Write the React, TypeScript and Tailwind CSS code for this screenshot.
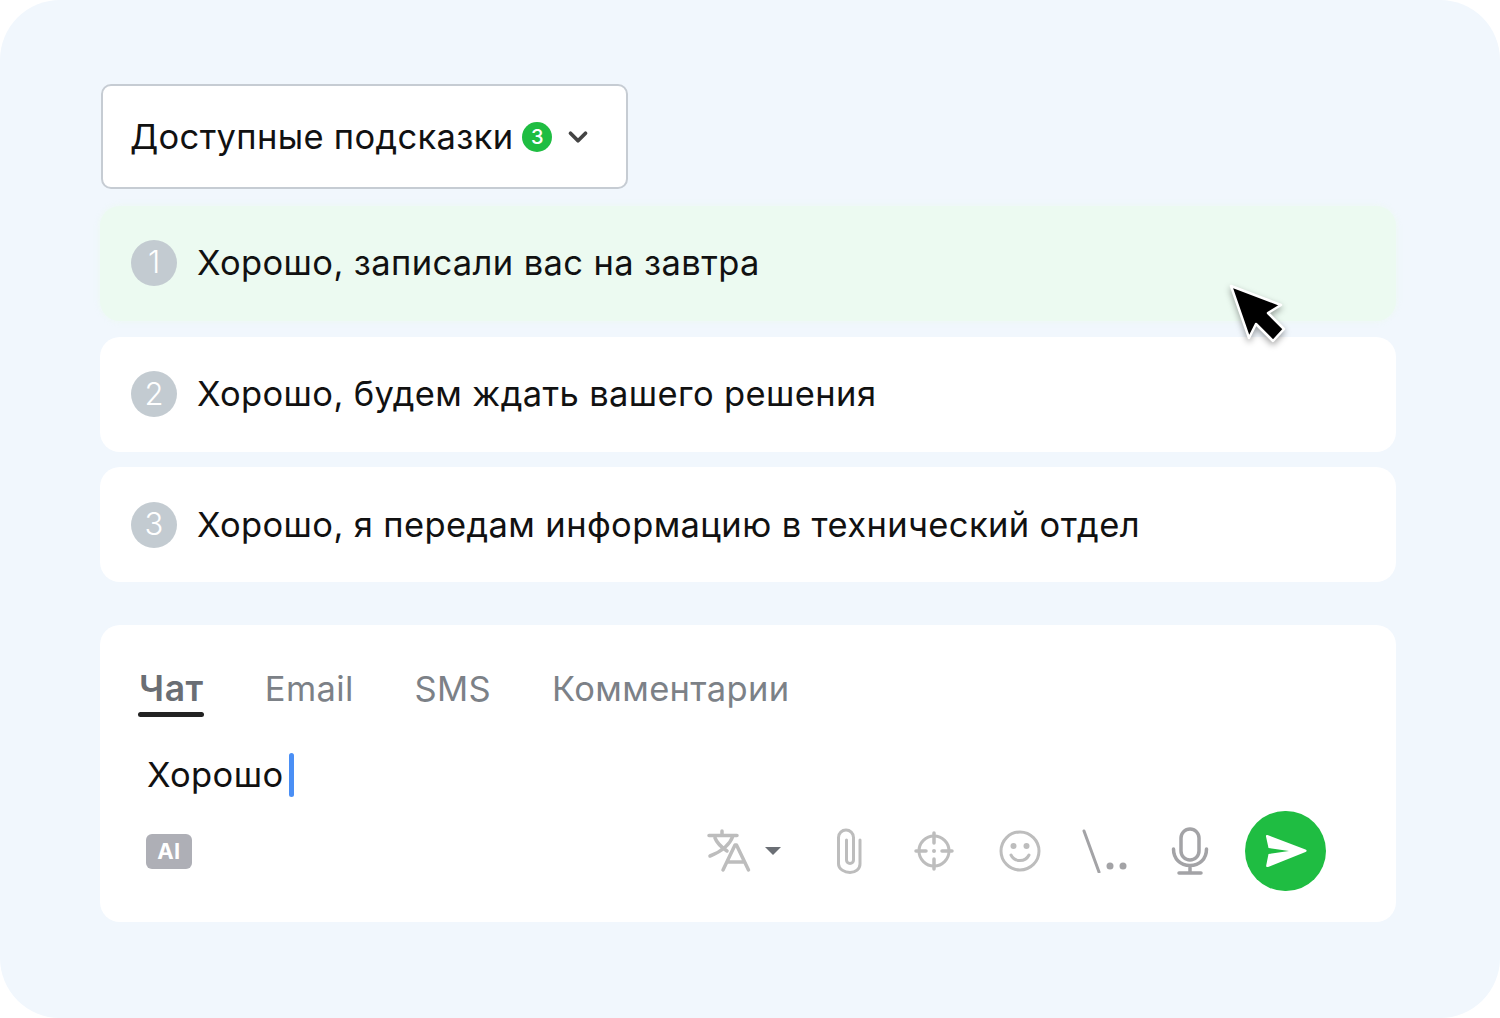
import { ChevronDown } from 'lucide-react'

const FONT = "font-['Inter','Noto_Sans',sans-serif]"

const SUGGESTIONS = [
  { n: 1, text: 'Хорошо, записали вас на завтра', active: true },
  { n: 2, text: 'Хорошо, будем ждать вашего решения', active: false },
  { n: 3, text: 'Хорошо, я передам информацию в технический отдел', active: false },
]

const TABS = ['Email', 'SMS', 'Комментарии']

function TranslateIcon() {
  return (
    <svg width="44" height="44" viewBox="0 0 44 44" fill="none" stroke="#bdbdbd" strokeWidth="3.500" strokeLinecap="round" strokeLinejoin="round">
      <path d="M2 6.500h28M15 2v4.500M26 7c-3 8-10 15-23 20M8 9c2 5 6 9 12 13" />
      <path d="M16 41l12-25h1.500l12 25M20.500 33h17" />
    </svg>
  )
}

function ClipIcon() {
  return (
    <svg width="30" height="46" viewBox="0 0 30 46" fill="none" stroke="#bdbdbd" strokeWidth="3" strokeLinecap="round">
      <path d="M25 12v24c0 5-4.500 8.500-10 8.500S3.500 41 3.500 36V9.500C3.500 5 7 2 11 2s7.500 3 7.500 7.500V32c0 2-1.500 3.500-3.500 3.500S11.500 34 11.500 32V12" />
    </svg>
  )
}

function TargetIcon() {
  return (
    <svg width="40" height="40" viewBox="0 0 40 40" fill="none" stroke="#bdbdbd" strokeWidth="3" strokeLinecap="round">
      <circle cx="20" cy="20" r="15" />
      <path d="M20 2v10M20 28v10M2 20h10M28 20h10" strokeWidth="3.500" />
      <circle cx="20" cy="20" r="2" fill="#bdbdbd" stroke="none" />
    </svg>
  )
}

function SmileIcon() {
  return (
    <svg width="42" height="42" viewBox="0 0 42 42" fill="none" stroke="#bdbdbd" strokeWidth="3" strokeLinecap="round">
      <circle cx="21" cy="21" r="19" />
      <circle cx="14.500" cy="16" r="3" fill="#bdbdbd" stroke="none" />
      <circle cx="27.500" cy="16" r="3" fill="#bdbdbd" stroke="none" />
      <path d="M12 25c2 4 5.500 5.500 9 5.500s7-1.500 9-5.500" />
    </svg>
  )
}

function SlashIcon() {
  return (
    <svg width="46" height="44" viewBox="0 0 46 44" fill="none">
      <path d="M2 2l15 41" stroke="#a3a3a6" strokeWidth="3" strokeLinecap="round" />
      <circle cx="28" cy="37" r="3.500" fill="#a3a3a6" />
      <circle cx="41" cy="37" r="3.500" fill="#a3a3a6" />
    </svg>
  )
}

function MicIcon() {
  return (
    <svg width="38" height="48" viewBox="0 0 38 48" fill="none" stroke="#a3a3a6" strokeWidth="3.500" strokeLinecap="round">
      <rect x="10" y="2" width="18" height="31" rx="9" />
      <path d="M2.500 22c0 10 7 16.500 16.500 16.500S35.500 32 35.500 22M19 38.500V46M8 46h22" />
    </svg>
  )
}

function SendIcon() {
  return (
    <svg width="42" height="34" viewBox="0 0 42 34" fill="#fff">
      <path d="M2.500 1 40.500 15.500c1.500.6 1.500 2 0 2.600L3 33c-1.200.4-2-.2-1.800-1.400L3.500 20 24 17 3.500 14 1 2.500C.8 1.200 1.300.6 2.500 1z" />
    </svg>
  )
}

function Cursor() {
  return (
    <svg width="60" height="62" viewBox="0 0 60 62" className="absolute left-[1227px] top-[282px] drop-shadow-[0_3px_3px_rgba(0,0,0,0.35)]">
      <path d="M4 4 54 23 41 31 57 47 46 59 29 42 22 56z" fill="#000" stroke="#fff" strokeWidth="2.500" strokeLinejoin="round" />
    </svg>
  )
}

export default function App() {
  return (
    <div className={`${FONT} relative h-[1018px] w-[1500px] overflow-hidden bg-white`}>
      <div className="h-full rounded-[60px] bg-[#f1f7fd] pl-[100px] pr-[104px] pt-[84px]">
        <button className="ml-[1px] flex h-[105px] w-[527px] items-center rounded-[10px] border-2 border-[#c6ccd3] bg-white pl-[27px] text-[34.5px] tracking-[0.33px] text-[#111]">
          Доступные подсказки
          <span className="ml-[9px] flex h-[30px] w-[30px] items-center justify-center rounded-full bg-[#1fbd42] text-[20px] font-medium text-white">
            3
          </span>
          <ChevronDown className="ml-[11px] text-[#444]" size={30} strokeWidth={3} />
        </button>

        <div className="mt-[17px] flex flex-col gap-[15.500px]">
          {SUGGESTIONS.map((s) => (
            <div
              key={s.n}
              className={`flex h-[115px] items-center gap-[20px] rounded-[20px] pl-[31px] ${
                s.active ? 'bg-[#ecfaf1] pb-[2px] shadow-[0_0_5px_1px_rgba(236,250,241,0.7)]' : 'bg-white'
              }`}
            >
              <span className="flex h-[46px] w-[46px] items-center justify-center rounded-full bg-[#c3cbd1] text-[31px] font-light text-white">
                {s.n}
              </span>
              <span className="text-[34.500px] tracking-[0.38px] text-[#111]">{s.text}</span>
            </div>
          ))}
        </div>

        <div className="mt-[43px] h-[297px] rounded-[20px] bg-white pl-[39px] pt-[44px]">
          <div className="flex gap-[61px] text-[34.500px] leading-[40px] tracking-[0.35px] text-[#7c8187]">
            <div className="relative text-[35.500px] font-semibold tracking-[0.6px] text-[#6a6e74]">
              Чат
              <span className="absolute -bottom-[8px] -left-[1px] h-[5px] w-[66px] rounded-full bg-[#222]" />
            </div>
            {TABS.map((t) => (
              <span key={t}>{t}</span>
            ))}
          </div>

          <div className="ml-[8px] mt-[44px] flex h-[44px] items-center text-[34.500px] tracking-[0.4px] text-[#111]">
            <span>Хорошо</span>
            <span className="ml-[5px] h-[44px] w-[5px] rounded-full bg-[#4a8ff5]" />
          </div>

          <div className="mt-[14px] flex h-[80px] items-center pr-[70px]">
            <span className="ml-[7px] flex h-[35px] w-[46px] items-center justify-center rounded-[6px] bg-[#aeafb6] text-[22px] font-bold tracking-[0.5px] text-white">
              AI
            </span>
            <div className="ml-auto flex items-center">
              <TranslateIcon />
              <span className="ml-[14px] h-0 w-0 border-x-[8px] border-t-[8px] border-x-transparent border-t-[#6b6f75]" />
              <span className="ml-[54px] flex"><ClipIcon /></span>
              <span className="ml-[49px] flex"><TargetIcon /></span>
              <span className="ml-[45px] flex"><SmileIcon /></span>
              <span className="ml-[41px] flex"><SlashIcon /></span>
              <span className="ml-[43px] flex"><MicIcon /></span>
              <span className="ml-[36px] flex h-[80px] w-[81px] items-center justify-center rounded-full bg-[#1fbd42]">
                <SendIcon />
              </span>
            </div>
          </div>
        </div>
      </div>
      <Cursor />
    </div>
  )
}
